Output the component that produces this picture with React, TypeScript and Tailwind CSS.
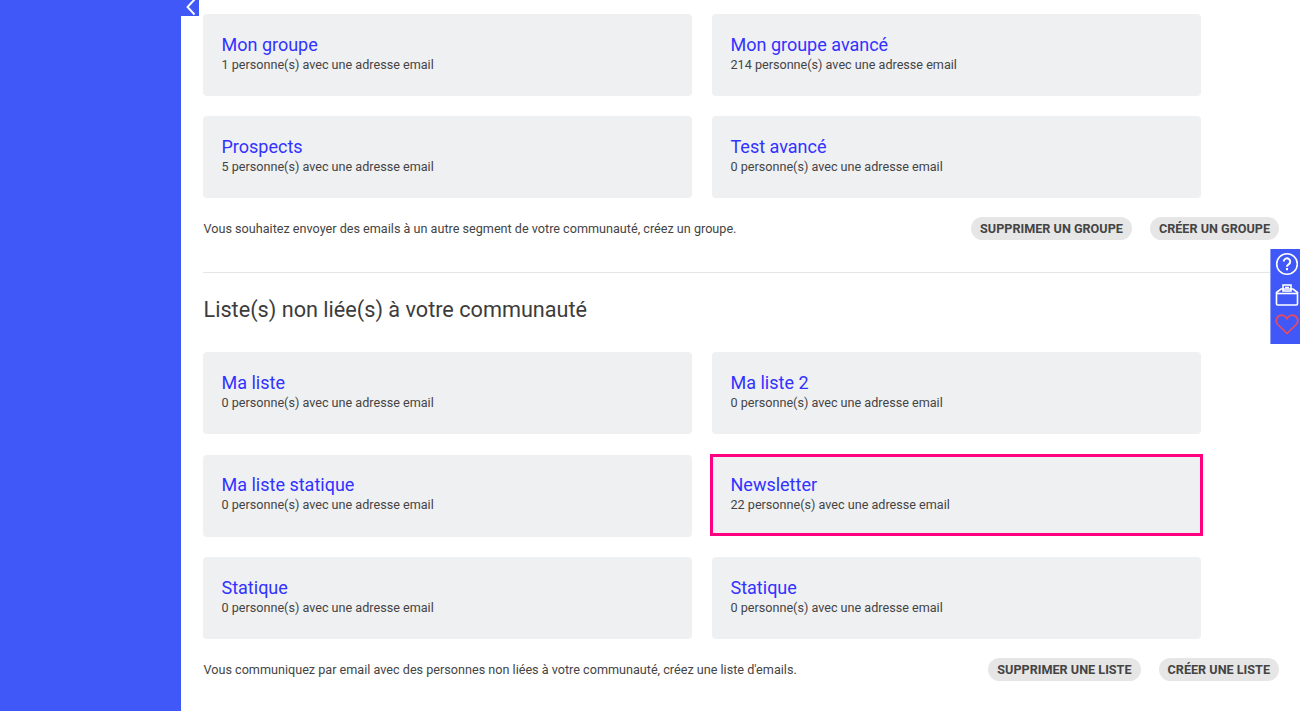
import React from "react";

const font = { fontFamily: "Roboto, sans-serif" };

function Card({ title, count, highlight }: { title: string; count: number; highlight?: boolean }) {
  return (
    <div
      className={
        highlight
          ? "h-[82px] -mx-[2px] -mt-[1px] border-[3px] border-[#ff0080] bg-[#eff0f2] pl-[17.5px] pt-[17.5px]"
          : "h-[82px] rounded-[4px] bg-[#eff0f2] pl-[18.5px] pt-[19.5px]"
      }
    >
      <div className="text-[18px] leading-[22px] text-[#3232ff]">{title}</div>
      <div className="text-[12.62px] leading-[17px] text-[#444444]">{count} personne(s) avec une adresse email</div>
    </div>
  );
}

function Pill({ children }: { children: React.ReactNode }) {
  return (
    <div className="h-[23px] rounded-full bg-[#e6e6e6] px-[9px] pt-[2px] flex items-center text-[12.64px] font-bold text-[#444444] whitespace-nowrap">
      {children}
    </div>
  );
}

function Row({ text, a, b }: { text: string; a: string; b: string }) {
  return (
    <div className="flex items-center justify-between h-[23px]">
      <div className="text-[12.64px] text-[#444444] pl-[0.5px] pt-[1px]">{text}</div>
      <div className="flex gap-[18px]">
        <Pill>{a}</Pill>
        <Pill>{b}</Pill>
      </div>
    </div>
  );
}

export default function App() {
  return (
    <div style={font} className="relative h-[711px] w-[1300px] overflow-hidden bg-white flex">
      <div className="w-[180.5px] shrink-0 bg-[#3f58f7]" />
      <div className="absolute left-[180px] top-0 w-[19px] h-[16px] bg-[#3f58f7] flex items-center justify-center">
        <svg width="12" height="16" viewBox="0 0 12 16" fill="none" stroke="white" strokeWidth="1.9">
          <path d="M10.5 -0.5 L3.5 7 L10.5 14.5" />
        </svg>
      </div>
      <div className="flex-1 pl-[22.5px] pr-[21px] pt-[14px]">
        <div className="grid grid-cols-[489px_489px] gap-x-[20px] gap-y-[20.3px]">
          <Card title="Mon groupe" count={1} />
          <Card title="Mon groupe avancé" count={214} />
          <Card title="Prospects" count={5} />
          <Card title="Test avancé" count={0} />
        </div>
        <div className="mt-[18.7px]">
          <Row text="Vous souhaitez envoyer des emails à un autre segment de votre communauté, créez un groupe." a="SUPPRIMER UN GROUPE" b="CRÉER UN GROUPE" />
        </div>
        <div className="mt-[32px] h-px bg-[#e6e6e6]" />
        <h2 className="mt-[23px] pl-[0.5px] text-[21.66px] leading-[28px] text-[#3c3c3c]">Liste(s) non liée(s) à votre communauté</h2>
        <div className="mt-[28.4px] grid grid-cols-[489px_489px] gap-x-[20px] gap-y-[20.45px]">
          <Card title="Ma liste" count={0} />
          <Card title="Ma liste 2" count={0} />
          <Card title="Ma liste statique" count={0} />
          <Card title="Newsletter" count={22} highlight />
          <Card title="Statique" count={0} />
          <Card title="Statique" count={0} />
        </div>
        <div className="mt-[18.8px]">
          <Row text="Vous communiquez par email avec des personnes non liées à votre communauté, créez une liste d'emails." a="SUPPRIMER UNE LISTE" b="CRÉER UNE LISTE" />
        </div>
      </div>
      <div className="absolute right-0 top-[249px] w-[30px] h-[95px] bg-[#3f58f7] flex flex-col items-center pt-[3px] pl-[2px] border-l border-[#8c9cf5]">
        <svg width="24" height="24" viewBox="0 0 24 24" fill="none" stroke="white" strokeWidth="1.6">
          <circle cx="12" cy="12" r="10.3" />
          <path d="M8.8 9.5a3.2 3.2 0 1 1 4.8 2.8c-1 .6-1.6 1.2-1.6 2.5" strokeWidth="2" />
          <path d="M12 16v2.2" strokeWidth="2" />
        </svg>
        <svg className="mt-[8px]" width="24" height="22" viewBox="0 0 24 22" fill="none" stroke="white" strokeWidth="1.6">
          <path d="M1.5 8.5 L6 5 H18 L22.5 8.5 V20 a1 1 0 0 1 -1 1 H2.5 a1 1 0 0 1 -1 -1 Z" />
          <path d="M1.5 9.5 H22.5" />
          <rect x="8" y="1" width="8" height="6" />
          <path d="M10 3.5 H14" />
        </svg>
        <svg className="mt-[7px]" width="24" height="22" viewBox="0 0 24 22" fill="none" stroke="#ea4a63" strokeWidth="1.7">
          <path d="M12 20.5 L2.8 11.5 C0.2 8.8 1 4 4.5 2.6 C7.6 1.4 10.6 3 12 5.6 C13.4 3 16.4 1.4 19.5 2.6 C23 4 23.8 8.8 21.2 11.5 Z" />
        </svg>
      </div>
    </div>
  );
}
